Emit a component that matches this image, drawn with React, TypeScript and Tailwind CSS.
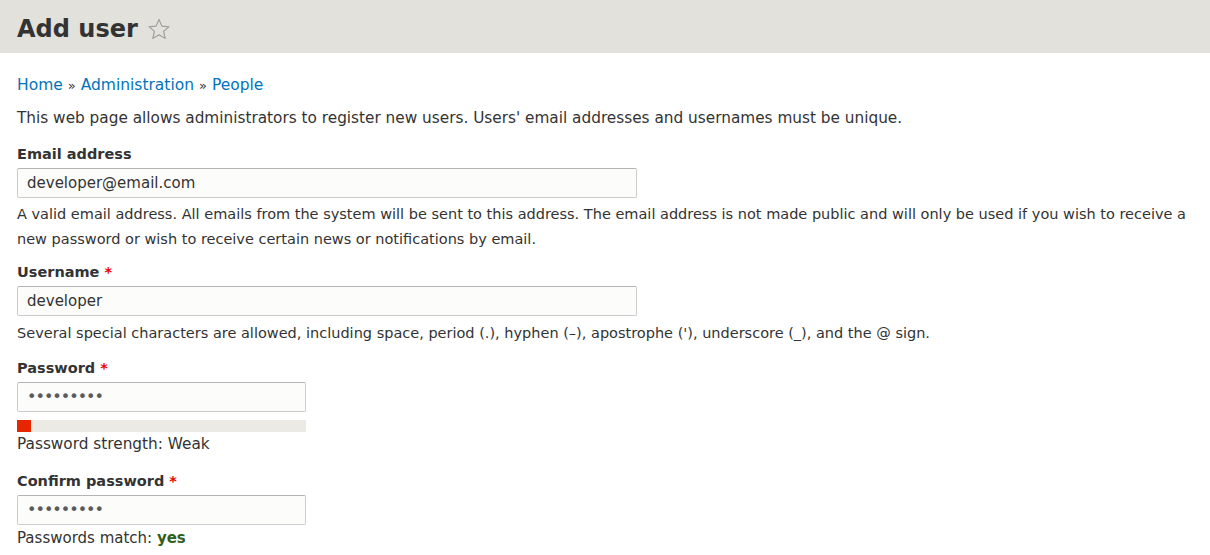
import React from "react";

const font = { fontFamily: '"DejaVu Sans", "Lucida Grande", Verdana, sans-serif' };

function Star() {
  return (
    <svg width="24" height="24" viewBox="0 0 24 24" className="ml-[9px]">
      <path
        d="M12 2.5l2.9 6.6 7.1.6-5.4 4.7 1.6 7-6.2-3.7-6.2 3.7 1.6-7L2 9.7l7.1-.6z"
        fill="none"
        stroke="#9a9a9a"
        strokeWidth="1.1"
        strokeLinejoin="round"
      />
    </svg>
  );
}

function Req() {
  return <span className="text-[#e00] ml-[5px] font-bold">*</span>;
}

const inputCls =
  "mt-[4px] h-[30px] border border-[#ccc] border-t-[#b4b4b4] rounded-[2px] bg-[#fcfcfa] px-[9px] flex items-center";

export default function App() {
  return (
    <div className="w-[1210px] h-[555px] bg-white text-[#333] overflow-hidden" style={font}>
      <div className="h-[53px] bg-[#e2e1dc] flex items-center px-[17px] pt-[5px]">
        <h1 className="text-[24px] font-bold text-[#333] leading-none">Add user</h1>
        <Star />
      </div>
      <div className="px-[17px] text-[14.5px]">
        <div className="mt-[22px] text-[#0074bd] text-[15.5px] leading-[20px]">
          <span>Home</span> <span className="text-[#333] text-[13px]">»</span> <span>Administration</span>{" "}
          <span className="text-[#333] text-[13px]">»</span> <span>People</span>
        </div>
        <p className="mt-[12px] leading-[20px] text-[15.3px] whitespace-nowrap">
          This web page allows administrators to register new users. Users' email addresses and usernames must be unique.
        </p>
        <div className="mt-[16px] font-bold leading-[20px]">Email address</div>
        <div className={inputCls + " w-[620px] text-[15px]"}>developer@email.com</div>
        <p className="mt-[4px] leading-[25px] whitespace-nowrap">
          A valid email address. All emails from the system will be sent to this address. The email address is not made public and will only be used if you wish to receive a
          <br />
          new password or wish to receive certain news or notifications by email.
        </p>
        <div className="mt-[10px] font-bold leading-[20px]">
          Username<Req />
        </div>
        <div className={inputCls + " w-[620px] text-[15px]"}>developer</div>
        <p className="mt-[7px] leading-[20px] whitespace-nowrap">
          Several special characters are allowed, including space, period (.), hyphen (–), apostrophe ('), underscore (_), and the @ sign.
        </p>
        <div className="mt-[15px] font-bold leading-[20px]">
          Password<Req />
        </div>
        <div className={inputCls + " w-[289px] text-[#5a5a5a] tracking-[-1px] text-[16px]"}>•••••••••</div>
        <div className="mt-[8px] w-[289px] h-[12px] bg-[#ebeae4]">
          <div className="w-[14px] h-[12px] bg-[#e62600]" />
        </div>
        <div className="leading-[24px] text-[15.3px]">Password strength: Weak</div>
        <div className="mt-[15px] font-bold leading-[20px]">
          Confirm password<Req />
        </div>
        <div className={inputCls + " w-[289px] text-[#5a5a5a] tracking-[-1px] text-[16px]"}>•••••••••</div>
        <div className="leading-[26px] text-[15px]">
          Passwords match: <span className="text-[#325e1c] font-bold">yes</span>
        </div>
      </div>
    </div>
  );
}
